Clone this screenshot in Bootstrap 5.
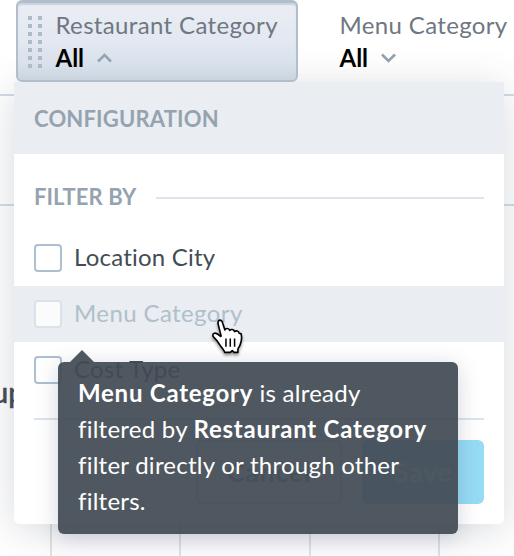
<!DOCTYPE html>
<html lang="en">
<head>
<meta charset="utf-8">
<meta name="viewport" content="width=device-width, initial-scale=1">
<title>Filter configuration</title>
<link href="https://cdn.jsdelivr.net/npm/bootstrap@5.3.0/dist/css/bootstrap.min.css" rel="stylesheet">
<style>
body{font-family:Lato,"Open Sans",sans-serif;font-size:24px;line-height:32px;color:#434c56;background:#fff}
.stage{width:514px;height:556px}
.filter-bar{height:96px;border-bottom:2px solid #d3dce8}
.second-bar{height:110px;border-bottom:2px solid #d3dce8}
.chart-area{height:350px}
.axis-label{left:-8px;top:168px;font-size:29px;line-height:36px;font-weight:500;-webkit-text-stroke:.5px #434c56}
.grid-lines{height:36px;padding-left:50px}
.grid-lines div{border-left:2px solid #e3e4e6;flex:0 0 129.3px}
.chip{width:282px;height:82px;margin-left:16px;padding:10px 0 0 10px;border:2px solid #b2bfcb;border-top-width:3px;border-radius:6px;background:linear-gradient(#eaedf3 0%,#e3e8f1 50%,#d9e1ec 78%,#cad4df 100%);box-shadow:inset 0 2px 1px #c8d3df;z-index:3}
.dots{margin-top:3px}
.chip-text{margin-left:13.5px}
.chip-title{color:#6f7782;letter-spacing:.35px;white-space:nowrap}
.chip-title,.chip-value{line-height:32px}
.chip-value{color:#000;font-weight:700;gap:13px}
.chip-value span{padding-top:1px}
.chip .chip-title{margin-top:-4px}
.plain-filter{margin-left:41.5px;padding-top:9px}
.menu{left:14px;top:82px;width:490px;height:442px;background:#fff;border-radius:0 0 5px 5px;box-shadow:0 6px 42px rgba(60,70,90,.2);z-index:2}
.menu-head{height:72px;padding:1px 20px 0;background:#eaedf2}
.caps{font-size:22px;font-weight:700;color:#94a3af;white-space:nowrap;letter-spacing:.18px}
.menu-section{height:88px;padding:0 20px}
.menu-section .caps{margin-top:-3px;letter-spacing:.05px}
.options{margin-top:-12px}
.rule{height:2px;background:#dce3ec}
.opt{height:56px;padding:0 20px;gap:12px;letter-spacing:.22px}
.opt-name{margin-top:-2px}
.opt.off{background:#eaedf2;color:#b0c0cb;letter-spacing:.4px}
.box{width:28px;height:28px;border:2px solid #afbfd2;border-radius:4px;background:#fff}
.off .box{border-color:#dbe2eb;background:#fbfbfb}
.foot-rule{margin:20px 0}
.act{height:64px;border-radius:6px;font-size:27px;font-weight:700;letter-spacing:.6px;padding:0}
.act-cancel,.act-cancel:hover{width:146px;border:2px solid #d5dde8;color:#8b96a1}
.act-save,.act-save:hover{width:122px;background:#96dcf5;color:#fff;border:0}
.tip{left:58px;top:362px;width:400px;height:172px;padding:13px 20px;border-radius:6px;background:rgba(66,74,84,.93);color:#fff;line-height:36px;letter-spacing:.25px;white-space:nowrap;box-shadow:0 4px 22px rgba(67,80,115,.24);z-index:4}
.tip::before{content:"";position:absolute;left:12px;top:-12px;border:12px solid transparent;border-top:0;border-bottom-color:rgba(66,74,84,.93)}
.tip b{letter-spacing:.75px}
.pointer{left:207px;top:317px;z-index:5}
</style>
<script src="https://cdn.jsdelivr.net/npm/bootstrap@5.3.0/dist/js/bootstrap.bundle.min.js"></script>
</head>
<body>
<div class="stage position-relative overflow-hidden">
  <div class="filter-bar d-flex align-items-start">
    <div class="chip position-relative d-flex flex-shrink-0">
      <svg width="14" height="52" viewBox="0 0 14 52" fill="#adbbc7" class="dots flex-shrink-0"><path d="M0 0h4v4H0zM10 0h4v4h-4zM0 8h4v4H0zM10 8h4v4h-4zM0 16h4v4H0zM10 16h4v4h-4zM0 24h4v4H0zM10 24h4v4h-4zM0 32h4v4H0zM10 32h4v4h-4zM0 40h4v4H0zM10 40h4v4h-4zM0 48h4v4H0zM10 48h4v4h-4z"/></svg>
      <div class="chip-text">
        <div class="chip-title">Restaurant Category</div>
        <div class="chip-value d-flex align-items-center"><span>All</span><svg width="15" height="10" viewBox="0 0 15 10" fill="none" stroke="#94a3b1" stroke-width="2.6"><path d="M1 8.5 7.5 2 14 8.5"/></svg></div>
      </div>
    </div>
    <div class="plain-filter">
      <div class="chip-title">Menu Category</div>
      <div class="chip-value d-flex align-items-center"><span>All</span><svg width="15" height="10" viewBox="0 0 15 10" fill="none" stroke="#94a3b1" stroke-width="2.6"><path d="M1 1.5 7.5 8 14 1.5"/></svg></div>
    </div>
  </div>
  <div class="second-bar"></div>
  <div class="chart-area position-relative d-flex flex-column justify-content-end">
    <div class="axis-label position-absolute">up</div>
    <div class="grid-lines d-flex"><div></div><div></div><div></div><div></div></div>
  </div>

  <div class="menu position-absolute">
    <div class="menu-head d-flex align-items-center"><span class="caps">CONFIGURATION</span></div>
    <div class="menu-section"><div class="d-flex align-items-center h-100"><span class="caps me-3">FILTER BY</span><div class="rule flex-grow-1 ms-1"></div></div></div>
    <div class="options">
      <div class="opt d-flex align-items-center"><span class="box"></span><span class="opt-name">Location City</span></div>
      <div class="opt off d-flex align-items-center"><span class="box"></span><span class="opt-name">Menu Category</span></div>
      <div class="opt d-flex align-items-center"><span class="box"></span><span class="opt-name">Cost Type</span></div>
    </div>
    <div class="px-3 mx-1">
      <div class="rule foot-rule"></div>
      <div class="d-flex justify-content-end" style="gap:20px">
        <button class="btn act act-cancel">Cancel</button>
        <button class="btn act act-save">Save</button>
      </div>
    </div>
  </div>

  <div class="tip position-absolute"><b>Menu Category</b> is already<br>filtered by <b>Restaurant Category</b><br>filter directly or through other<br>filters.</div>

  <svg class="pointer position-absolute" width="39" height="41" viewBox="0 0 36 38">
    <g style="filter:drop-shadow(0 2px 1.5px rgba(0,0,0,.4))">
      <path d="M13 17.500 10.300 6.800C9.800 4.200 10.400 3 11.800 2.900c1.300 0 2.200.9 2.700 2.800L16.500 12c.3-1.600 3.800-2 4.500.5.800-1.500 4-1.200 4.500 1 1.200-1.200 3.900-.6 4.200 1.500l1.700.4c.9 2.600.3 7.600-.8 10.400-.7 1.800-2 3.100-2 4.200v2.800h-3.700l-1.600-1.700-1.700 1.700h-5.300c-.4-2.400-2.700-4.300-4-6.300-1.600-2.700-3.100-5.200-6-7.700-1.400-1.200-1.300-3.400.5-3.800 2.300-.5 4 1.300 5.800 3z" fill="#fff" stroke="#000" stroke-width="1.500" stroke-linejoin="round"/>
    </g>
    <path d="M17.500 20v7.500M21.500 20v7.500M25.500 20v7.500" stroke="#000" stroke-width="1.400"/>
  </svg>
</div>
</body>
</html>
